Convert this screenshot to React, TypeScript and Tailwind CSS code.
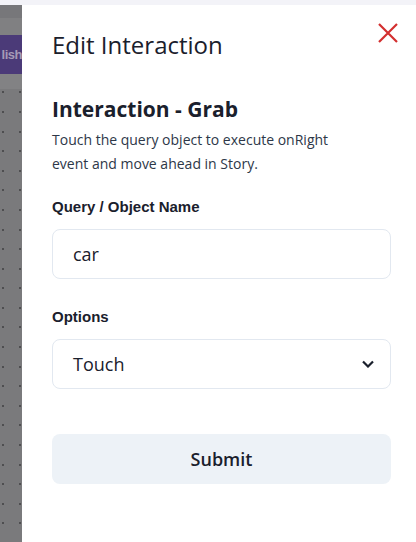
const sans = { fontFamily: '"Open Sans", "Noto Sans", sans-serif' }
const arial = { fontFamily: '"Liberation Sans", Arial, sans-serif' }

export default function App() {
  const dots = Array.from({ length: 23 })

  return (
    <div className="w-[416px] h-[542px] flex flex-col overflow-hidden bg-[#f3f3f8]">
      <div className="h-[5px] shrink-0" />
      <div className="flex flex-1 min-h-0">
        {/* Backdrop of the page behind the drawer */}
        <div className="w-[22px] shrink-0 flex flex-col bg-[#7a7a7c] overflow-hidden">
          <div className="h-[13px] bg-[#77777a]" />
          <div className="h-[17px] bg-[#808082]" />
          <div className="h-[40px] bg-[#4b3a78] flex items-center justify-end">
            <span className="text-[13px] font-bold tracking-[-0.5px] text-[#a59bb6] whitespace-nowrap" style={arial}>
              lish
            </span>
          </div>
          <div className="h-[15px] bg-[#828284]" />
          <div className="flex flex-col pt-[2px]">
            {dots.map((_, i) => (
              <div key={i} className="h-[19.6px] flex justify-between px-[1.5px]">
                <span className="w-[2px] h-[2px] bg-[#4e4e50]" />
                <span className="w-[2px] h-[2px] bg-[#4e4e50]" />
              </div>
            ))}
          </div>
        </div>

        {/* Drawer */}
        <div className="relative flex-1 bg-white pl-[30px] pr-[25px] pt-[24px]" style={sans}>
          <button className="absolute top-[16px] right-[16px] w-[24px] h-[24px] flex items-center justify-center">
            <svg width="22" height="22" viewBox="0 0 22 22" fill="none">
              <path d="M2 2 L20 20 M20 2 L2 20" stroke="#d32f2f" strokeWidth="2.2" />
            </svg>
          </button>

          <h1 className="text-[24px] leading-[32px] text-[#1a202c]">Edit Interaction</h1>

          <h2 className="mt-[34px] text-[21px] leading-[28px] font-bold text-[#1a202c]">
            Interaction - Grab
          </h2>
          <p className="max-w-[310px] text-[14px] leading-[24px] text-[#2d3748] mt-[5px]">
            Touch the query object to execute onRight event and move ahead in Story.
          </p>

          <label className="block mt-[21px] text-[15px] leading-[20px] font-bold text-[#1a202c]" style={arial}>
            Query / Object Name
          </label>
          <div className="mt-[12px] h-[50px] rounded-[8px] border border-[#e2e8f0] flex items-center px-[20px]">
            <span className="text-[18px] text-[#1a202c]">car</span>
          </div>

          <label className="block mt-[28px] text-[15px] leading-[20px] font-bold text-[#1a202c]" style={arial}>
            Options
          </label>
          <div className="mt-[12px] h-[50px] rounded-[8px] border border-[#e2e8f0] flex items-center justify-between pl-[20px] pr-[16px]">
            <span className="text-[18px] text-[#1a202c]">Touch</span>
            <svg width="12" height="8" viewBox="0 0 12 8" fill="none">
              <path d="M1 1.5 L6 6.5 L11 1.5" stroke="#1a202c" strokeWidth="2.2" />
            </svg>
          </div>

          <button className="mt-[45px] w-full h-[50px] rounded-[8px] bg-[#edf2f7] text-[18px] font-semibold text-[#1a202c]">
            Submit
          </button>
        </div>
      </div>
    </div>
  )
}
